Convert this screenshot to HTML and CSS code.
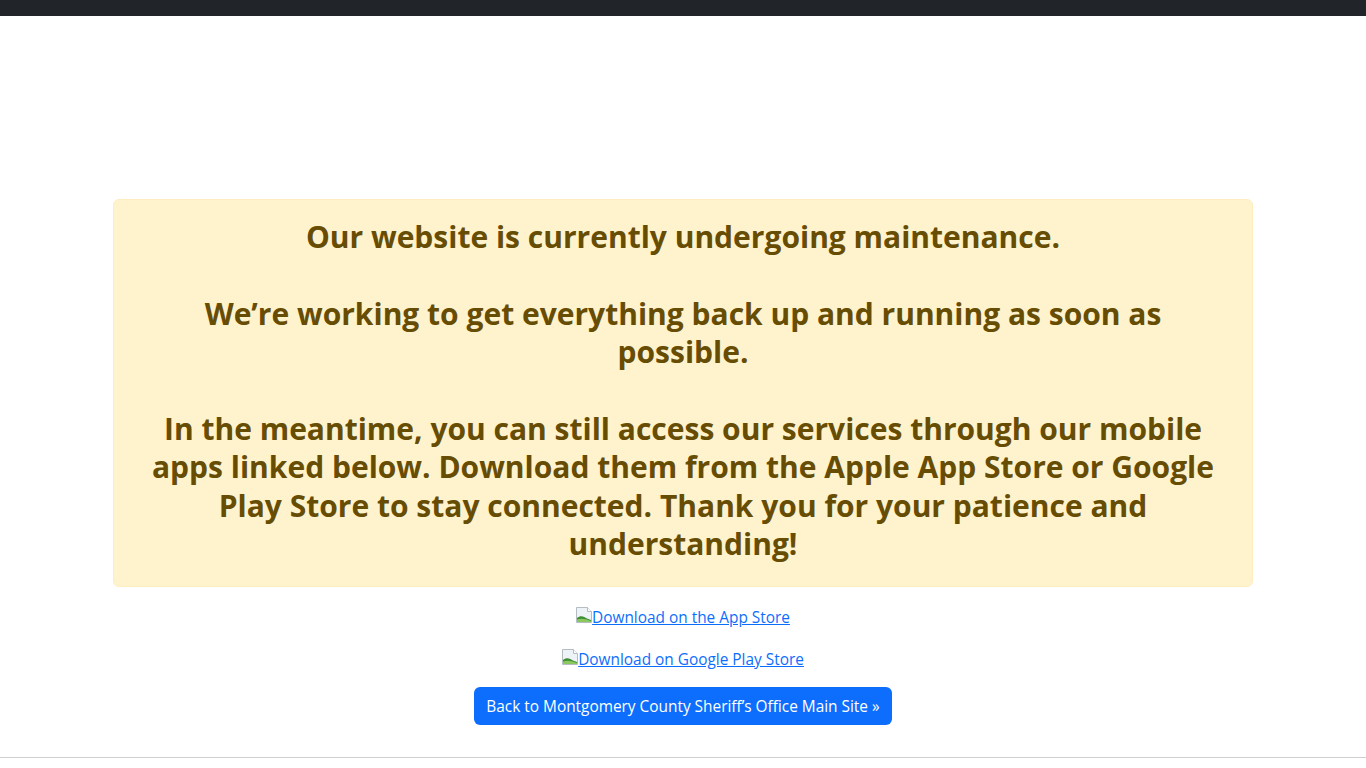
FILE: index.html
```html
<!DOCTYPE html>
<html lang="en">
<head>
<meta charset="utf-8">
<title>Maintenance</title>
<link rel="stylesheet" href="styles.css">
</head>
<body>
<div class="topbar"></div>
<main class="page">
  <div class="container">
    <div class="alert">
      <h2 class="alert-text">Our website is currently undergoing maintenance.<br><br>We’re working to get everything back up and running as soon as possible.<br><br>In the meantime, you can still access our services through our mobile apps linked below. Download them from the Apple App Store or Google Play Store to stay connected. Thank you for your patience and understanding!</h2>
    </div>
    <div class="stores">
      <p class="store"><a href="#"><svg class="broken" width="16" height="16" viewBox="0 0 16 16"><path d="M0.5 0.5h11l4 4v11h-15z" fill="#eef3f8" stroke="#b4bcc4"/><path d="M11.5 0.5v4h4" fill="#fff" stroke="#b4bcc4"/><path d="M1 15V11c3-3 7-2 10 0.5L15 13v2z" fill="#3f8f35"/><path d="M1 15v-2.5c4-1.5 8-1 14 1.5v1z" fill="#8cc860"/></svg>Download on the App Store</a></p>
      <p class="store"><a href="#"><svg class="broken" width="16" height="16" viewBox="0 0 16 16"><path d="M0.5 0.5h11l4 4v11h-15z" fill="#eef3f8" stroke="#b4bcc4"/><path d="M11.5 0.5v4h4" fill="#fff" stroke="#b4bcc4"/><path d="M1 15V11c3-3 7-2 10 0.5L15 13v2z" fill="#3f8f35"/><path d="M1 15v-2.5c4-1.5 8-1 14 1.5v1z" fill="#8cc860"/></svg>Download on Google Play Store</a></p>
      <a class="btn" href="#">Back to Montgomery County Sheriff’s Office Main Site »</a>
    </div>
  </div>
</main>
<footer class="footer"></footer>
</body>
</html>
```
FILE: styles.css
```css
html, body {
  margin: 0;
  padding: 0;
  background: #fff;
}
body {
  font-family: "Open Sans", "Noto Sans", sans-serif;
  font-size: 15.4px;
  line-height: 24px;
  color: #212529;
}
.topbar {
  height: 16px;
  background: #212529;
}
.page {
  padding-top: 183px;
}
.container {
  width: 1140px;
  margin: 0 auto;
}
.alert {
  background: #fff3cd;
  border: 1px solid #ffedbf;
  border-radius: 6px;
  padding: 16px;
  color: #664d03;
  text-align: center;
  margin-bottom: 16px;
}
.alert-text {
  margin: 0 0 6px;
  padding: 2px 13px 0;
  font-size: 30px;
  font-weight: 700;
  line-height: 38.4px;
}
.stores {
  text-align: center;
}
.store {
  margin: 0 0 16px;
  height: 26px;
  line-height: 29px;
}
.store a {
  color: #0d6efd;
  text-decoration: underline;
}
.broken {
  vertical-align: 0;
}
.btn {
  display: inline-block;
  background: #0d6efd;
  color: #fff;
  text-decoration: none;
  border-radius: 6px;
  padding: 8px 12px 6px;
  line-height: 24px;
}
.footer {
  margin-top: 32px;
  border-top: 1px solid #cfcfcf;
  height: 40px;
}
```
